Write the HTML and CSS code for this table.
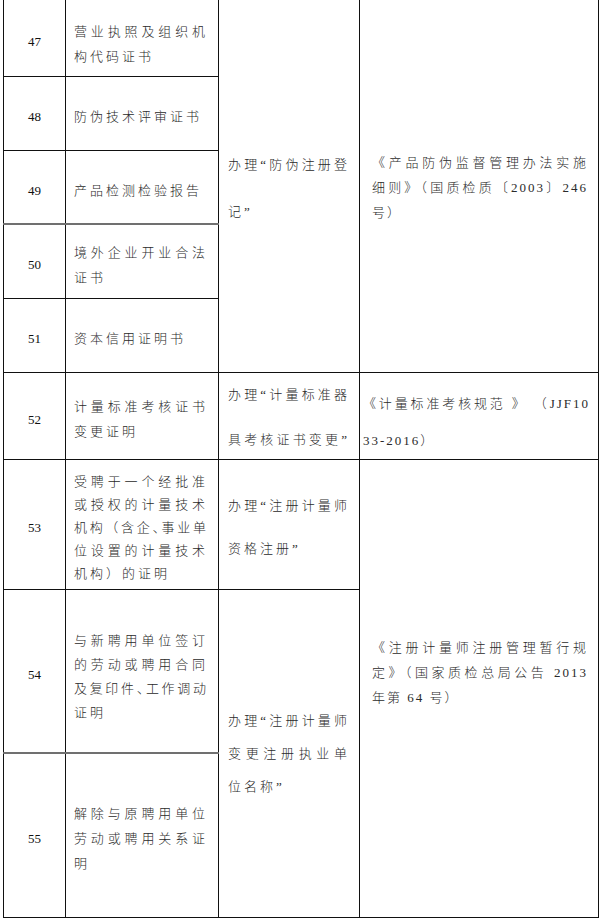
FILE: index.html
```html
<!DOCTYPE html>
<html lang="zh-CN">
<head>
<meta charset="utf-8">
<title>材料清单</title>
<link rel="stylesheet" href="styles.css">
</head>
<body>
<table class="sheet">
  <colgroup>
    <col class="c-no">
    <col class="c-doc">
    <col class="c-item">
    <col class="c-basis">
  </colgroup>
  <tbody>
    <tr class="r47 first">
      <td class="no">47</td>
      <td class="doc pad-lg"><span class="ln j">营业执照及组织机</span><span class="ln">构代码证书</span></td>
      <td class="item item-a" rowspan="5"><span class="ln j">办理<span class="q">“</span>防伪注册登</span><span class="ln">记<span class="q">”</span></span></td>
      <td class="basis basis-a" rowspan="5"><span class="ln j">《产品防伪监督管理办法实施</span><span class="ln j">细则》（国质检质〔2003〕246</span><span class="ln">号）</span></td>
    </tr>
    <tr class="r48">
      <td class="no">48</td>
      <td class="doc"><span class="ln">防伪技术评审证书</span></td>
    </tr>
    <tr class="r49">
      <td class="no">49</td>
      <td class="doc"><span class="ln">产品检测检验报告</span></td>
    </tr>
    <tr class="r50 gray-top">
      <td class="no">50</td>
      <td class="doc"><span class="ln j">境外企业开业合法</span><span class="ln">证书</span></td>
    </tr>
    <tr class="r51">
      <td class="no">51</td>
      <td class="doc"><span class="ln">资本信用证明书</span></td>
    </tr>
    <tr class="r52">
      <td class="no">52</td>
      <td class="doc doc-52"><span class="ln j">计量标准考核证书</span><span class="ln">变更证明</span></td>
      <td class="item item-b"><span class="ln j">办理<span class="q">“</span>计量标准器</span><span class="ln j">具考核证书变更<span class="q">”</span></span></td>
      <td class="basis basis-b"><span class="ln j">《计量标准考核规范 》 （JJF10</span><span class="ln">33-2016）</span></td>
    </tr>
    <tr class="r53">
      <td class="no">53</td>
      <td class="doc doc-53"><span class="ln j">受聘于一个经批准</span><span class="ln j">或授权的计量技术</span><span class="ln j tight">机构（含企<span class="half">、</span>事业单</span><span class="ln j">位设置的计量技术</span><span class="ln">机构）的证明</span></td>
      <td class="item item-c"><span class="ln j">办理<span class="q">“</span>注册计量师</span><span class="ln">资格注册<span class="q">”</span></span></td>
      <td class="basis basis-c" rowspan="3"><span class="ln j">《注册计量师注册管理暂行规</span><span class="ln j">定》（国家质检总局公告 2013</span><span class="ln">年第 64 号）</span></td>
    </tr>
    <tr class="r54">
      <td class="no">54</td>
      <td class="doc doc-54"><span class="ln j">与新聘用单位签订</span><span class="ln j">的劳动或聘用合同</span><span class="ln j tight">及复印件<span class="half">、</span>工作调动</span><span class="ln">证明</span></td>
      <td class="item item-d" rowspan="2"><span class="ln j">办理<span class="q">“</span>注册计量师</span><span class="ln j">变更注册执业单</span><span class="ln">位名称<span class="q">”</span></span></td>
    </tr>
    <tr class="r55 gray-top">
      <td class="no">55</td>
      <td class="doc"><span class="ln j">解除与原聘用单位</span><span class="ln j">劳动或聘用关系证</span><span class="ln">明</span></td>
    </tr>
  </tbody>
</table>
</body>
</html>
```

FILE: styles.css
```css
html, body {
  margin: 0;
  padding: 0;
  background: #fff;
}

body {
  font-family: "Liberation Serif", "Noto Sans CJK SC", serif;
  font-size: 13px;
  color: #2a2a2a;
}

.sheet {
  border-collapse: collapse;
  table-layout: fixed;
  width: 595px;
  margin-left: 3px;
}

.c-no { width: 62px; }
.c-doc { width: 153px; }
.c-item { width: 141px; }
.c-basis { width: 239px; }

.sheet td {
  border: 1px solid #111;
  vertical-align: middle;
  padding: 0;
  font-weight: 300;
}

.first td { border-top: none; }

.r47, .r48, .r49, .r50, .r51 { height: 74px; }
.r47 { height: 76px; }
.r52 { height: 87px; }
.r53 { height: 130px; }
.r54 { height: 164px; }
.r55 { height: 164px; }

.gray-top td.no,
.gray-top td.doc { border-top: 2px solid #707070; }

.ln {
  display: block;
  white-space: nowrap;
}

.j { text-align-last: justify; text-align: justify; }

.q { font-family: "Liberation Serif", serif; }

.half { font-feature-settings: "halt"; }

.no {
  text-align: center;
  font-family: "Liberation Serif", serif;
  font-size: 13px;
  color: #111;
  padding-top: 8px !important;
}

.doc {
  letter-spacing: 3px;
  line-height: 25px;
  padding: 7px 10px 0 8px !important;
}
.pad-lg { padding-top: 12px !important; }
.doc-53 { line-height: 23px; padding-top: 6px !important; }
.doc-54 { line-height: 24px; padding-top: 12px !important; }
.tight { letter-spacing: 2px; }

.item {
  letter-spacing: 3px;
  padding: 0 9px 0 9px !important;
}
.item-a { line-height: 47px; padding-top: 5px !important; }
.item-b { line-height: 20px; padding-top: 4px !important; }
.item-b .ln + .ln { margin-top: 25px; }
.item-c { line-height: 43px; padding-top: 5px !important; }
.item-d { line-height: 33px; }

.basis {
  letter-spacing: 2px;
  line-height: 25px;
  padding: 0 10px 0 12px !important;
}
.basis-a { padding-top: 4px !important; }
.basis-b { line-height: 20px; padding: 14px 8px 0 3px !important; }
.basis-b .ln + .ln { margin-top: 17px; }
.basis-c { padding-bottom: 32px !important; }
```
